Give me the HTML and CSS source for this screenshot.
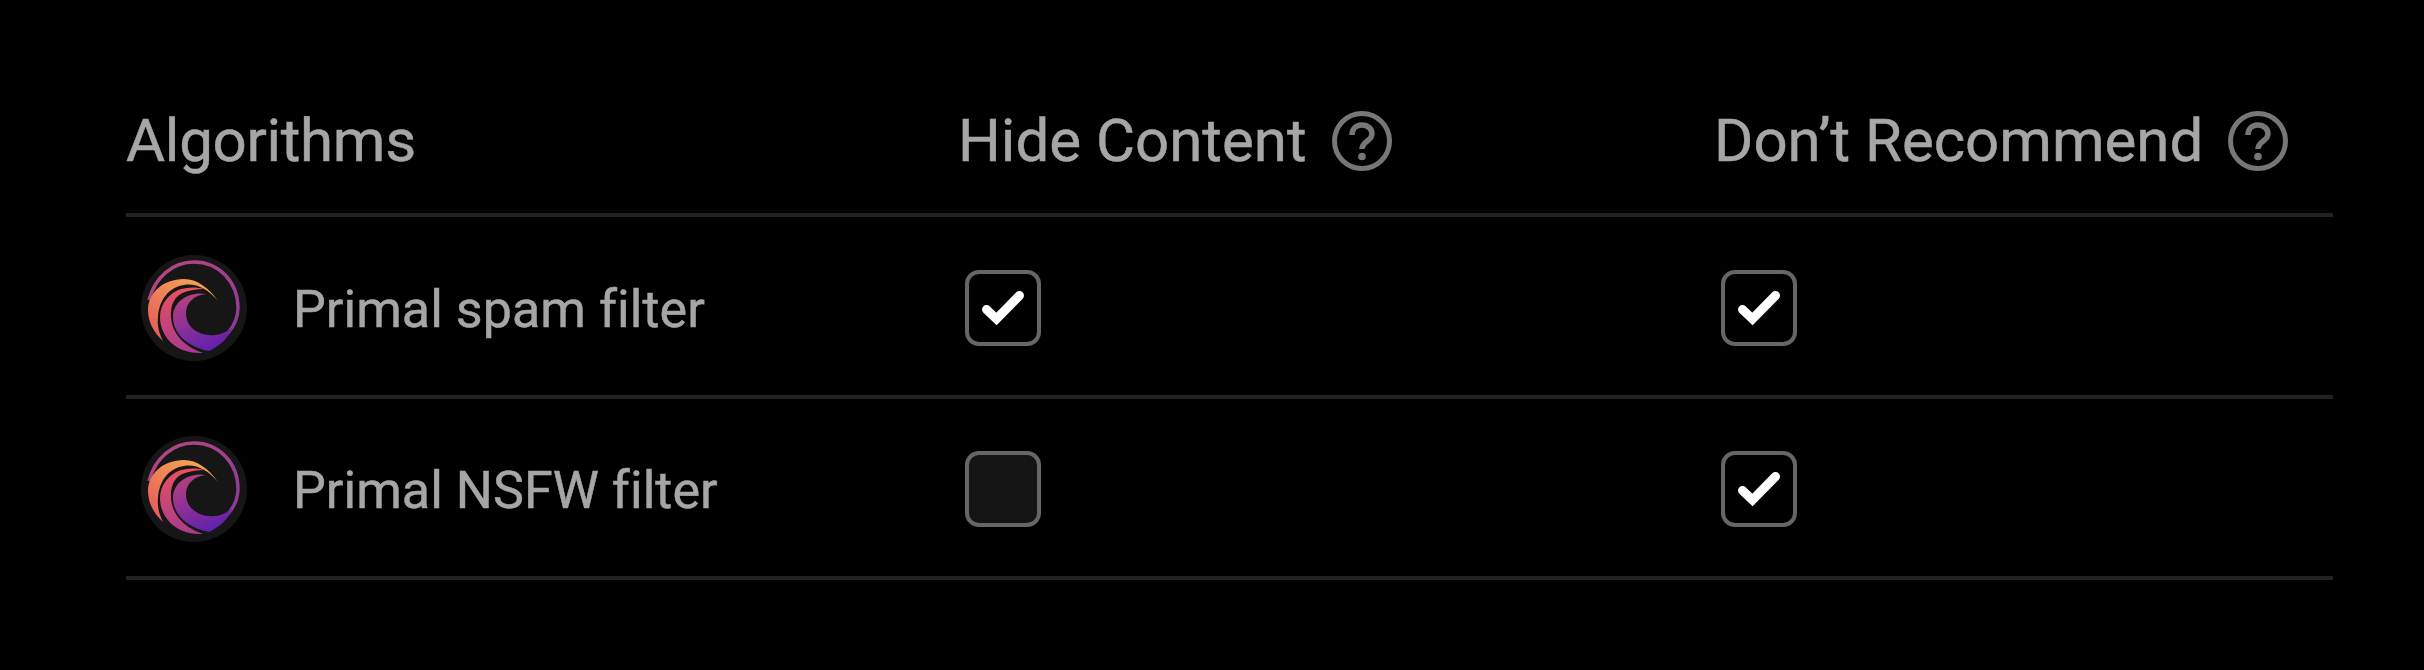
FILE: index.html
```html
<!DOCTYPE html>
<html>
<head>
  <title>Content Moderation</title>
  <link rel="stylesheet" href="styles.css">
</head>
<body>
  <svg class="defs" width="0" height="0">
    <defs>
      <linearGradient id="ringGrad" x1="0" y1="0" x2="1" y2="1">
        <stop offset="0" stop-color="#b8487f"/>
        <stop offset="1" stop-color="#8a3a9a"/>
      </linearGradient>
      <linearGradient id="outerGrad" x1="0.8" y1="0" x2="0" y2="1">
        <stop offset="0" stop-color="#f5a94f"/>
        <stop offset="1" stop-color="#e4525f"/>
      </linearGradient>
      <linearGradient id="midGrad" x1="0.5" y1="0" x2="0.5" y2="1">
        <stop offset="0" stop-color="#e8525c"/>
        <stop offset="1" stop-color="#a93a8f"/>
      </linearGradient>
      <linearGradient id="innerGrad" x1="0.3" y1="0" x2="0.7" y2="1">
        <stop offset="0" stop-color="#b3407f"/>
        <stop offset="1" stop-color="#5e1fb0"/>
      </linearGradient>
      <symbol id="logo" viewBox="0 0 106 106">
        <circle cx="53" cy="53" r="53" fill="#161616"/>
        <path d="M8 45C14 22 32 7 53 7C78 7 97 27 97 53C97 62 93 71 87 78" fill="none" stroke="url(#ringGrad)" stroke-width="3.4"/>
        <path d="M77 46C68 33 56 24 43 24C22 24 7 38 7 55C7 67 13 78 22 86C18 78 16 70 17 62C18 45 28 32 43 30C55 28 67 34 77 46Z" fill="url(#outerGrad)"/>
        <path d="M63 34C56 32 48 32 40 34C28 38 19 49 19 62C19 78 30 92 45 96C51 98 57 98 62 98C45 92 31 80 30 62C29 50 34 40 44 37C50 35 57 34 63 34Z" fill="url(#midGrad)"/>
        <path d="M65 39C50 36 32 45 32 62C32 80 48 92 68 96C76 92 86 86 92 72C85 78 76 81 68 80C54 79 45 70 45 58C45 48 53 40 65 39Z" fill="url(#innerGrad)"/>
      </symbol>
      <symbol id="help" viewBox="0 0 60 60">
        <circle cx="30" cy="30" r="27.5" fill="none" stroke="currentColor" stroke-width="5"/>
        <path d="M20 24C20 17 25 14 30 14C36 14 40 18 40 23C40 30 30 30 30 38" fill="none" stroke="currentColor" stroke-width="5.5"/>
        <circle cx="30" cy="45.5" r="3.8" fill="currentColor"/>
      </symbol>
      <symbol id="check" viewBox="0 0 44 36">
        <path d="M5.5 19.5L15.5 29L38.5 5.5" fill="none" stroke="#fff" stroke-width="9" stroke-linecap="round" stroke-linejoin="miter"/>
      </symbol>
    </defs>
  </svg>

  <div class="moderation-table">
    <div class="table-row table-head">
      <div class="col-name">Algorithms</div>
      <div class="col-hide">Hide Content <svg class="help-icon"><use href="#help"/></svg></div>
      <div class="col-rec">Don’t Recommend <svg class="help-icon"><use href="#help"/></svg></div>
    </div>

    <div class="table-row">
      <div class="col-name">
        <svg class="algo-logo"><use href="#logo"/></svg>
        <span class="algo-name">Primal spam filter</span>
      </div>
      <div class="col-hide"><span class="checkbox"><svg class="check-icon"><use href="#check"/></svg></span></div>
      <div class="col-rec"><span class="checkbox"><svg class="check-icon"><use href="#check"/></svg></span></div>
    </div>

    <div class="table-row">
      <div class="col-name">
        <svg class="algo-logo"><use href="#logo"/></svg>
        <span class="algo-name">Primal NSFW filter</span>
      </div>
      <div class="col-hide"><span class="checkbox unchecked"></span></div>
      <div class="col-rec"><span class="checkbox"><svg class="check-icon"><use href="#check"/></svg></span></div>
    </div>
  </div>
</body>
</html>
```

FILE: styles.css
```css
body {
  margin: 0;
  background-color: #000;
  color: #a6a6a6;
  font-family: Roboto, sans-serif;
  -webkit-text-stroke: 0.5px #a6a6a6;
}
.defs {
  display: block;
  height: 0;
}
.moderation-table {
  margin: 0 0 0 126px;
  width: 2207px;
  padding-top: 74px;
}
.table-row {
  display: flex;
  align-items: center;
  box-sizing: border-box;
  height: 181.5px;
  padding-top: 4px;
  border-bottom: 4px solid #222;
  font-size: 52px;
}
.table-head {
  height: 143px;
  padding-top: 0;
  padding-bottom: 6px;
  font-size: 60px;
}
.table-head .col-name {
  letter-spacing: -0.3px;
}
.table-head .col-hide,
.table-head .col-rec {
  margin-left: -1px;
}
.table-head .col-hide {
  margin-right: 1px;
}
.col-name {
  display: flex;
  align-items: center;
  width: 833px;
}
.col-hide {
  display: flex;
  align-items: center;
  width: 756px;
}
.col-rec {
  display: flex;
  align-items: center;
}
.help-icon {
  width: 60px;
  height: 60px;
  margin-left: 25px;
  color: #777;
}
.algo-logo {
  width: 106px;
  height: 106px;
  margin: 0 46px 0 15px;
}
.algo-name {
  margin-top: 3px;
  letter-spacing: 0.05px;
}
.checkbox {
  display: flex;
  align-items: center;
  justify-content: center;
  box-sizing: border-box;
  width: 76px;
  height: 76px;
  margin-left: 6px;
  border: 4px solid #666;
  border-radius: 14px;
}
.checkbox.unchecked {
  background-color: #141414;
}
.check-icon {
  width: 44px;
  height: 36px;
}
```
